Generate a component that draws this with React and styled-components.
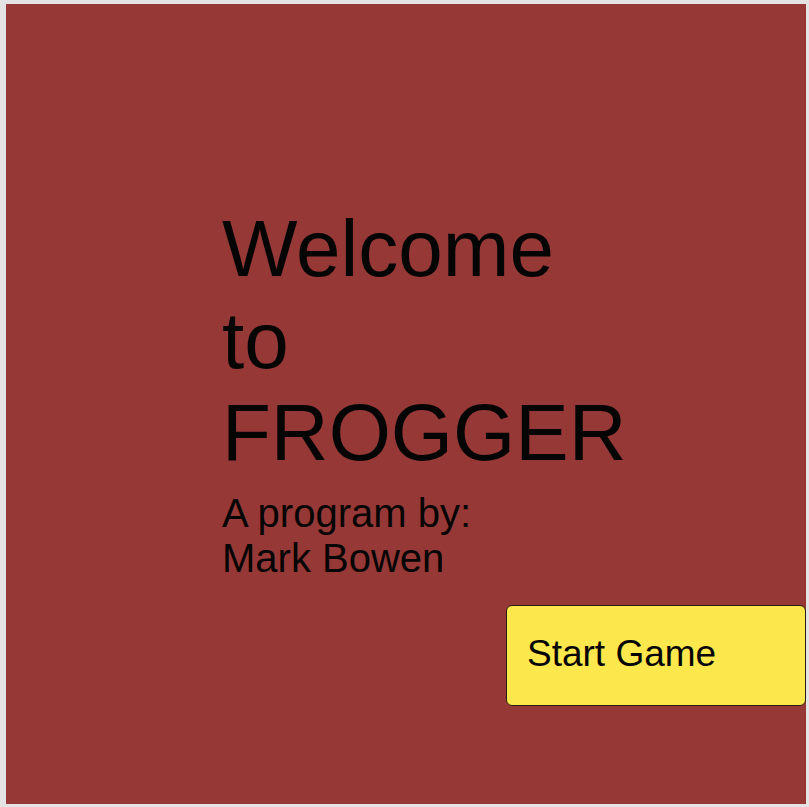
import React from 'react';
import styled, { createGlobalStyle } from 'styled-components';

const GlobalStyle = createGlobalStyle`
  html, body {
    margin: 0;
    padding: 0;
    background: #e4e4e4;
  }
  body {
    font-family: "Liberation Sans", Arial, Helvetica, sans-serif;
  }
`;

const Page = styled.div`
  display: flex;
  padding: 4px 0 0 6px;
`;

const Stage = styled.main`
  display: flex;
  flex-direction: column;
  width: 800px;
  height: 800px;
  box-sizing: border-box;
  padding: 199px 0 0 216px;
  background: #963836;
  color: #050505;
`;

const Title = styled.h1`
  margin: 0;
  width: 420px;
  font-size: 80px;
  font-weight: normal;
  line-height: normal;
`;

const Credit = styled.p`
  margin: 12px 0 0;
  font-size: 40px;
  line-height: normal;
`;

const StartButton = styled.button`
  align-self: flex-end;
  margin-top: 24px;
  width: 300px;
  height: 101px;
  box-sizing: border-box;
  padding: 0 0 4px 20px;
  text-align: left;
  font-family: inherit;
  font-size: 37px;
  color: #050505;
  background: #fce74c;
  border: 1px solid #2a1c10;
  border-radius: 6px;
  cursor: pointer;
`;

export default function App() {
  return (
    <>
      <GlobalStyle />
      <Page>
        <Stage>
          <Title>Welcome to FROGGER</Title>
          <Credit>
            A program by:
            <br />
            Mark Bowen
          </Credit>
          <StartButton>Start Game</StartButton>
        </Stage>
      </Page>
    </>
  );
}
